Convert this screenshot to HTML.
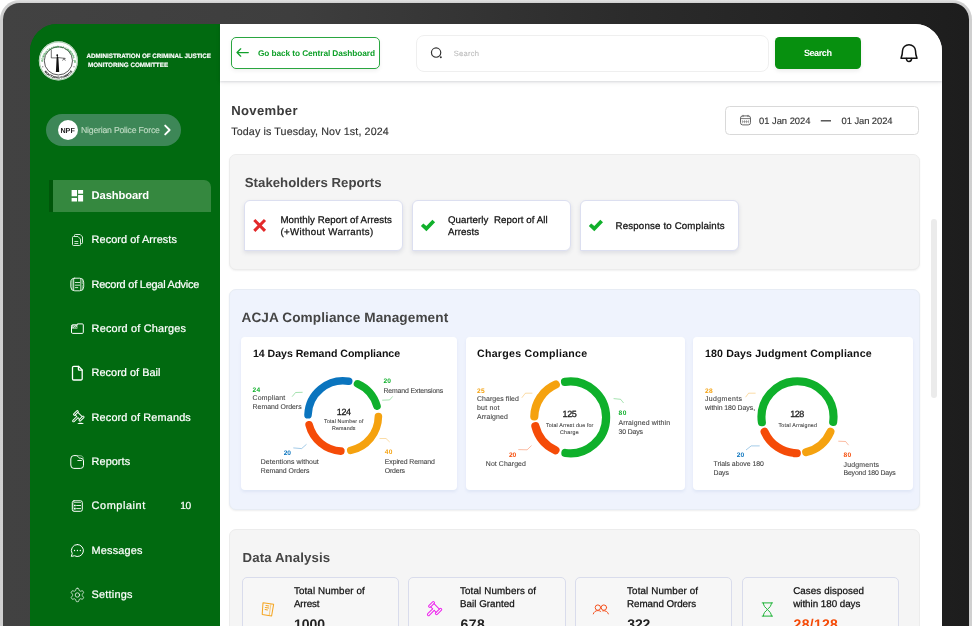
<!DOCTYPE html>
<html lang="en">
<head>
<meta charset="utf-8">
<title>ACJMC Dashboard</title>
<style>
*{box-sizing:border-box;margin:0;padding:0}
html,body{width:973px;height:626px;overflow:hidden;background:#fff;font-family:"Liberation Sans",sans-serif;color:#333}
.abs{position:absolute}
.t{font-family:"Liberation Sans",sans-serif;white-space:pre;text-rendering:geometricPrecision}
#frame{position:absolute;left:0;top:0;width:972px;height:660px;border-radius:19.500px;background:linear-gradient(180deg,#e2e2e2 0,#cfcfcf 3px,#d0d0d0 100%)}
#bezel{position:absolute;left:3px;top:3px;width:966px;height:660px;border-radius:16.500px;background:linear-gradient(90deg,#424242 0%,#3e3e3e 30%,#2b2b2b 65%,#1d1d1d 100%)}
#screen{position:absolute;left:30px;top:24px;width:912px;height:640px;border-radius:27px 27px 0 0;background:linear-gradient(90deg,#016a10 0,#016a10 190px,#fff 190px);overflow:hidden}
#pg{position:absolute;left:-30px;top:-24px;width:973px;height:664px}
#side{position:absolute;left:30px;top:24px;width:190px;height:640px;background:#016a10}
#head{position:absolute;left:220px;top:24px;width:722px;height:56.5px;background:#fff;box-shadow:0 1px 2px rgba(40,50,80,.13),0 2px 5px rgba(0,0,0,.06)}
.card{position:absolute;border-radius:7px;left:229px;width:691px}
.sub{position:absolute;background:#fff;border-radius:4px;box-shadow:0 2px 3px rgba(170,185,225,.22)}
.sk{position:absolute;top:200px;height:51px;width:159px;background:#fff;border:1px solid #dcdff0;border-radius:6px 6px 6px 0;box-shadow:0 2px 4px rgba(60,70,110,.13)}
.dc{position:absolute;top:577px;height:90px;width:157px;border:1px solid #d9dcec;border-radius:5px;background:#f7f7f7}
svg{overflow:visible}
.ic{position:absolute;fill:none;stroke:#fff;stroke-width:1;stroke-linecap:round;stroke-linejoin:round}
</style>
</head>
<body>
<div id="frame"></div><div id="bezel"></div>
<div id="screen"><div id="pg">
  <div id="side"></div>
  <!-- main cards -->
  <div class="card" style="top:154.2px;height:116px;background:#f5f5f5;border:1px solid #ececec;box-shadow:0 1px 2px rgba(0,0,0,.06)"></div>
  <div class="sk" style="left:244px"></div>
  <div class="sk" style="left:412px"></div>
  <div class="sk" style="left:580px"></div>
  <div class="card" style="top:289px;height:221px;border-radius:7px;background:#eff3fd;border:1px solid #e7ecf4;box-shadow:0 1px 2px rgba(0,0,0,.07)"></div>
  <div class="sub" style="left:241px;top:337px;width:216px;height:153px"></div>
  <div class="sub" style="left:466px;top:337px;width:219px;height:153px"></div>
  <div class="sub" style="left:693px;top:337px;width:220px;height:153px"></div>
  <div class="card" style="top:529px;height:140px;background:#f5f5f5;border:1px solid #ececec"></div>
  <div class="dc" style="left:242px"></div>
  <div class="dc" style="left:408px;width:158px"></div>
  <div class="dc" style="left:575px"></div>
  <div class="dc" style="left:742.2px"></div>
  <div id="head"></div>
  <!-- scrollbar -->
  <div class="abs" style="left:931px;top:219px;width:6px;height:178.500px;border-radius:3px;background:#ebebeb"></div>

  <svg class="abs" style="left:0;top:0;will-change:transform" width="973" height="664" viewBox="0 0 973 664"><circle cx="58.4" cy="60.85" r="19.600" fill="#fff"/><circle cx="58.4" cy="60.85" r="18.900" fill="none" stroke="#3c8f47" stroke-width=".45"/><circle cx="58.4" cy="60.85" r="14.100" fill="none" stroke="#111" stroke-width=".7"/><path id="lgt" d="M42.80 63.35A15.6 15.6 0 1 1 74.00 63.35" fill="none"/><path id="lgb" d="M44.32 71.41A17.6 17.6 0 0 0 72.48 71.41" fill="none"/><text class="t" font-size="2.800" font-weight="700" fill="#2f9440" letter-spacing="-.02"><textPath href="#lgt" startOffset="1.5">ADMINISTRATION OF CRIMINAL JUSTICE</textPath></text><text class="t" font-size="2.600" font-weight="700" fill="#222" stroke="#222" stroke-width=".12" letter-spacing=".0"><textPath href="#lgb" startOffset=".6">MONITORING COMMITTEE</textPath></text><circle cx="42.80" cy="66.85" r=".5" fill="#222"/><circle cx="74.00" cy="66.85" r=".5" fill="#222"/><g stroke="#111" fill="none" stroke-width=".6" stroke-linecap="round"><path d="M57.200 54.300c.6 0 .9.500.9 1.100c0 .7-.3 1-.5 1.200c.5.300.8.900.8 1.600L59.200 71.900H55.900L56.600 58.200c0-.7.200-1.300.6-1.600c-.5-.2-.8-.6-.8-1.200c0-.6.300-1.100.800-1.100Z" fill="#111" stroke="none"/><path d="M51.300 50.200V57.900H57"/><path d="M57.500 57.500L65.200 58.400"/><path d="M62.600 60.300c.2-1.700 2.500-1.700 2.700 0" stroke-width=".55"/><path d="M64 58.300V59.200" stroke-width=".4"/></g></svg>
  <!-- org pill -->
  <div class="abs" style="left:46px;top:114.300px;width:135px;height:31.800px;border-radius:16px;background:#3d8757"></div>
  <div class="abs" style="left:57.700px;top:120.300px;width:20px;height:20px;border-radius:50%;background:#fff"></div>
  <svg class="abs" style="left:163px;top:124.400px" width="9" height="12" viewBox="0 0 9 12"><path d="M2.200 1.600L6.600 6L2.200 10.400" fill="none" stroke="#fff" stroke-width="1.900" stroke-linecap="round" stroke-linejoin="round"/></svg>
  <!-- active item -->
  <div class="abs" style="left:49px;top:180px;width:162px;height:32px;background:#35883f;border-left:4px solid #00570a;border-radius:0 7px 0 0"></div>
  <svg class="abs" style="left:0;top:0" width="973" height="664" viewBox="0 0 973 664" fill="none" stroke="#fff" stroke-width="1" stroke-linecap="round" stroke-linejoin="round"><path d="M71.600 190.100h5.400v6.100h-5.400zM78.100 190.100h5v3.600h-5zM78.100 195.100h5v6.500h-5zM71.600 198h5.400v3.600h-5.400z" fill="#fff" stroke="none"/><g stroke="#d7ead9" stroke-width="1"><path d="M74.500 236.200V235.300a.8.800 0 0 1 .8-.8H80.200L82.500 236.900V242.700a.8.800 0 0 1-.8.800H80.800"/><path d="M72.500 237.300a.8.800 0 0 1 .8-.8H78L80.500 239.100V244.700a.8.800 0 0 1-.8.800H73.300a.8.800 0 0 1-.8-.8Z"/><path d="M74.800 241.500H77.900M74.800 243.500H77.900" stroke-width=".9"/></g><g stroke="#e3f0e4"><rect x="70.800" y="278.200" width="12.900" height="12.600" rx="3.900"/><path d="M71.300 281.500c0-1.500.9-2.600 2.300-3V290.600c-1.400-.4-2.300-1.500-2.300-3Z" fill="#fff" fill-opacity=".35" stroke="none"/><path d="M73.700 278.600V290.400M80.800 278.600V290.400" stroke-width=".9"/><path d="M82.300 279.600V283.800M82.300 285.600V289.600" stroke-width=".6"/><path d="M75.300 282.500H79.700M75.300 285.200H79.700M75.300 287.600H77.800" stroke-width=".9"/></g><path d="M71.500 325.800a1 1 0 0 1 1-1H77.400V323.900H82.300a1 1 0 0 1 1 1V332.400a1 1 0 0 1-1 1H72.500a1 1 0 0 1-1-1Z"/><path d="M71.800 325.100H77.400V328.600H71.800Z" fill="#fff" fill-opacity=".8" stroke="none"/><path d="M72.900 326.600l1.300-.9M74.500 327.600c.4-1.200 1.700-1.200 2.100 0" stroke="#016a10" stroke-width=".7"/><g stroke-width="1.300"><path d="M72.500 367.500a1.200 1.200 0 0 1 1.200-1.200H78.500L82.200 369.900V378.800a1.200 1.200 0 0 1-1.200 1.200H73.700a1.200 1.200 0 0 1-1.200-1.200Z"/><path d="M78.400 366.500V369.200a.9.900 0 0 0 .9.900H82"/></g><g transform="translate(78.7 415.8) rotate(45) scale(0.8)" fill="none" stroke="#fff" stroke-width="1.19" stroke-linejoin="round"><rect x="-6.1" y="-3.6" width="2.3" height="7.2" rx=".9"/><rect x="3.8" y="-3.9" width="2.3" height="7.8" rx=".9"/><path d="M-3.800 -2.300H3.800M-3.800 2.300H-1.100M1.100 2.300H3.800"/><path d="M-1.100 2.300V9.200a1.100 1.100 0 0 0 2.200 0V2.300"/></g><path d="M77.300 424c1.300-1.700 5.300-1.700 6.600 0Z" fill="#fff" stroke="none"/><path d="M70.800 458.600a3 3 0 0 1 3-3H76.300c.7 0 1 .2 1.500.8L79 457.800c.3.300.6.400 1 .4H80.700a2.800 2.800 0 0 1 2.800 2.800V465.400a3 3 0 0 1-3 3H73.800a3 3 0 0 1-3-3Z"/><path d="M76.700 455.700H80.200c1.600 0 2.800.9 3.100 2.500" stroke-opacity=".55"/><path d="M77.800 460.500H81.400" stroke-width=".9"/><rect x="72.300" y="500.800" width="10" height="10.500" rx="1.700"/><path d="M74.200 502.500H80.600" stroke-width=".8" stroke-opacity=".8"/><path d="M76.600 505.500H80.600M76.600 508.600H80.600" stroke-width=".9"/><path d="M74 504.700H75.700V506.300H74ZM74 507.800H75.700V509.400H74Z" fill="#fff" stroke="none"/><path d="M73.300 501.600V510.600" stroke-width=".6" stroke-opacity=".6"/><path d="M77.400 544.500a6 6 0 1 1-2.900 11.250L71.300 556.400l.9-2.900A6 6 0 0 1 77.400 544.500Z"/><g fill="#fff" stroke="none"><circle cx="74.500" cy="550.500" r=".65"/><circle cx="77.400" cy="550.500" r=".65"/><circle cx="80.300" cy="550.500" r=".65"/></g><path d="M77.40 588.30L77.75 588.31L78.10 588.34L78.44 588.44L78.69 588.92L78.89 589.45L79.03 589.98L79.14 590.47L79.35 590.61L79.58 590.72L79.80 590.84L80.01 590.97L80.22 591.12L80.46 591.23L80.93 591.08L81.47 590.93L82.02 590.84L82.56 590.82L82.82 591.06L83.02 591.35L83.20 591.65L83.37 591.96L83.52 592.27L83.60 592.62L83.32 593.08L82.95 593.51L82.56 593.90L82.20 594.24L82.17 594.50L82.19 594.75L82.20 595.00L82.19 595.25L82.17 595.50L82.20 595.76L82.56 596.10L82.95 596.49L83.32 596.92L83.60 597.38L83.52 597.73L83.37 598.04L83.20 598.35L83.02 598.65L82.82 598.94L82.56 599.18L82.02 599.16L81.47 599.07L80.93 598.92L80.46 598.77L80.22 598.88L80.01 599.03L79.80 599.16L79.58 599.28L79.35 599.39L79.14 599.53L79.03 600.02L78.89 600.55L78.69 601.08L78.44 601.56L78.10 601.66L77.75 601.69L77.40 601.70L77.05 601.69L76.70 601.66L76.36 601.56L76.11 601.08L75.91 600.55L75.77 600.02L75.66 599.53L75.45 599.39L75.22 599.28L75.00 599.16L74.79 599.03L74.58 598.88L74.34 598.77L73.87 598.92L73.33 599.07L72.78 599.16L72.24 599.18L71.98 598.94L71.78 598.65L71.60 598.35L71.43 598.04L71.28 597.73L71.20 597.38L71.48 596.92L71.85 596.49L72.24 596.10L72.60 595.76L72.63 595.50L72.61 595.25L72.60 595.00L72.61 594.75L72.63 594.50L72.60 594.24L72.24 593.90L71.85 593.51L71.48 593.08L71.20 592.62L71.28 592.27L71.43 591.96L71.60 591.65L71.78 591.35L71.98 591.06L72.24 590.82L72.78 590.84L73.33 590.93L73.87 591.08L74.34 591.23L74.58 591.12L74.79 590.97L75.00 590.84L75.22 590.72L75.45 590.61L75.66 590.47L75.77 589.98L75.91 589.45L76.11 588.92L76.36 588.44L76.70 588.34L77.05 588.31Z" stroke-width=".9" stroke-opacity=".85"/><circle cx="77.400" cy="595" r="2.200" stroke-width=".9" stroke-opacity=".85"/></svg>
  <!-- header widgets -->
  <div class="abs" style="left:231.200px;top:37.200px;width:148.600px;height:31.400px;border:1px solid #2aa640;border-radius:5px;background:#fff;box-shadow:0 2px 4px rgba(0,0,0,.06)"></div>
  <svg class="abs" style="left:235.900px;top:48.300px" width="13" height="9" viewBox="0 0 13 9"><path d="M12.300 4.500H1M4.700 .8L1 4.500l3.700 3.700" fill="none" stroke="#11a12b" stroke-width="1.250" stroke-linecap="round" stroke-linejoin="round"/></svg>
  <div class="abs" style="left:416px;top:35px;width:353px;height:37px;border:1px solid #efefef;border-radius:8px;background:#fff"></div>
  <svg class="abs" style="left:0;top:0" width="973" height="100" viewBox="0 0 973 100"><circle cx="436.100" cy="52.600" r="4.650" fill="none" stroke="#333" stroke-width="1.200"/><circle cx="440.800" cy="57.300" r="1" fill="#333"/></svg>
  <div class="abs" style="left:775.200px;top:37.200px;width:85.500px;height:31.400px;border-radius:4.500px;background:#07900f;box-shadow:0 2px 4px rgba(0,0,0,.08)"></div>
  <svg class="abs" style="left:0;top:0" width="973" height="100" viewBox="0 0 973 100" fill="none" stroke="#111" stroke-width="1.500" stroke-linejoin="round" stroke-linecap="round"><path d="M901 58.200C902.300 55.200 902.500 53.200 902.500 50.800A6.500 6.100 0 0 1 915.500 50.800C915.500 53.200 915.700 55.200 917 58.200Z"/><path d="M906.400 58.600a2.600 2.900 0 0 0 5.200 0"/></svg>

  <!-- date range -->
  <div class="abs" style="left:725.200px;top:105.900px;width:193.700px;height:28.700px;border:1px solid #d9d9d9;border-radius:4.500px;background:#fff"></div>
  <svg class="abs" style="left:739.800px;top:114.700px" width="11" height="10.500" viewBox="0 0 11 10.500"><rect x=".5" y=".9" width="10" height="9" rx="2.200" fill="none" stroke="#555" stroke-width=".9"/><path d="M.6 3.600h9.800" stroke="#555" stroke-width=".8"/><path d="M3 .3v1.400M8 .3v1.400" stroke="#555" stroke-width=".8" stroke-linecap="round"/><path d="M2.400 5.200v3M4.500 5.200v3M6.500 5.200v3M8.600 5.200v3M2.400 6.700h6.200" stroke="#777" stroke-width=".6"/></svg>
  <svg class="abs" style="left:0;top:0" width="973" height="200" viewBox="0 0 973 200"><path d="M820.800 120.800H831" stroke="#444" stroke-width="1.350" fill="none"/></svg>

  <!-- stakeholder icons -->
  <svg class="abs" style="left:0;top:0" width="973" height="300" viewBox="0 0 973 300"><path d="M254.300 220L265 230.900M265 220L254.300 230.900" stroke="#e3292a" stroke-width="3" stroke-linecap="butt" fill="none"/></svg>
  
  

  <svg class="abs" style="left:0;top:0" width="973" height="300" viewBox="0 0 973 300"><path d="M420.9 225.9L423.3 223.4L426.4 226.1L432.4 219.8L435.1 222.3L426.4 231.3ZM588.8 225.9L591.2 223.4L594.3 226.1L600.3 219.8L603.0 222.3L594.3 231.3Z" fill="#11b02c"/></svg>
<svg class="abs" style="left:0;top:0" width="973" height="664" viewBox="0 0 973 664" fill="none" stroke-linecap="round" stroke-linejoin="round"><g stroke="#f5a623" stroke-width="1.050"><path d="M263 602.800L273.600 604.300L271.600 616L262.200 614.400Z"/><path d="M270.900 604.200L269.200 615.400" stroke-width=".8" stroke-opacity=".7"/><path d="M266 605.500L268.900 605.900M265.300 607.600L268.700 608.100M265.100 609.600L267.500 610"/></g><g transform="translate(435.05 608.0) rotate(45) scale(1.0)" fill="none" stroke="#ee26ee" stroke-width="1.00" stroke-linejoin="round"><rect x="-6.1" y="-3.6" width="2.3" height="7.2" rx=".9"/><rect x="3.8" y="-3.9" width="2.3" height="7.8" rx=".9"/><path d="M-3.800 -2.300H3.800M-3.800 2.300H-1.100M1.100 2.300H3.800"/><path d="M-1.100 2.300V9.200a1.100 1.100 0 0 0 2.200 0V2.300"/></g><g stroke="#f4511e" stroke-width="1"><circle cx="597.900" cy="607.600" r="2.700"/><circle cx="603.900" cy="607.600" r="2.700"/><path d="M593.300 613.900c.6-2 2.300-3.300 4.600-3.300c1.100 0 2.100.3 2.900 1M602.700 610.800c2.800-.5 5 .8 5.700 3.100"/></g><g stroke="#1fb338" stroke-width="1"><path d="M762.200 602.900H772.600M762.200 616.100H772.600M763.400 603.100c0 3 2 4.400 4 6.400c2-2 4-3.400 4-6.400M763.400 615.900c0-3 2-4.400 4-6.400c2 2 4 3.400 4 6.400"/></g></svg>
<svg class="abs" style="left:0;top:0" width="973" height="626" viewBox="0 0 973 626"><path d="M308.02 414.77A35.2 35.2 0 0 1 348.71 381.23" fill="none" stroke="#0a74be" stroke-width="7.6" stroke-linecap="round"/><path d="M357.52 383.84A35.2 35.2 0 0 1 377.00 406.18" fill="none" stroke="#0fb02b" stroke-width="7.6" stroke-linecap="round"/><path d="M378.40 416.49A35.2 35.2 0 0 1 350.76 450.38" fill="none" stroke="#f5a20f" stroke-width="7.6" stroke-linecap="round"/><path d="M340.87 451.12A35.2 35.2 0 0 1 309.11 424.75" fill="none" stroke="#f54b08" stroke-width="7.6" stroke-linecap="round"/><path d="M292.1 396.7L295.6 392.5L302.6 392.3" fill="none" stroke="#0fb02b" stroke-width=".5" stroke-opacity=".75"/><path d="M293.3 447.9L301.6 448.6L306.5 444.3" fill="none" stroke="#0a74be" stroke-width=".5" stroke-opacity=".75"/><path d="M382.2 400.2L389.7 399.9L392.7 396.4" fill="none" stroke="#0fb02b" stroke-width=".5" stroke-opacity=".75"/><path d="M379.5 438.5L386.0 438.5L389.7 442.0" fill="none" stroke="#f5a20f" stroke-width=".5" stroke-opacity=".75"/><path d="M565.02 381.88A35.9 35.9 0 1 1 565.39 452.98" fill="none" stroke="#0fb02b" stroke-width="8.2" stroke-linecap="round"/><path d="M555.48 450.15A35.9 35.9 0 0 1 535.40 426.21" fill="none" stroke="#f54b08" stroke-width="8.2" stroke-linecap="round"/><path d="M534.31 416.52A35.9 35.9 0 0 1 555.77 384.53" fill="none" stroke="#f5a20f" stroke-width="8.2" stroke-linecap="round"/><path d="M521.8 397.8L525.4 393.2L532.4 393.2" fill="none" stroke="#f5a20f" stroke-width=".5" stroke-opacity=".75"/><path d="M518.3 449.6L527.1 449.8L531.5 445.6" fill="none" stroke="#f54b08" stroke-width=".5" stroke-opacity=".75"/><path d="M613.6 398.6L620.6 399.3L623.6 403.0" fill="none" stroke="#0fb02b" stroke-width=".5" stroke-opacity=".75"/><path d="M761.86 422.27A36.0 36.0 0 1 1 833.18 421.96" fill="none" stroke="#0fb02b" stroke-width="8.1" stroke-linecap="round"/><path d="M830.41 431.79A36.0 36.0 0 0 1 806.15 452.15" fill="none" stroke="#f5a20f" stroke-width="8.1" stroke-linecap="round"/><path d="M796.81 453.19A36.0 36.0 0 0 1 764.59 431.79" fill="none" stroke="#f54b08" stroke-width="8.1" stroke-linecap="round"/><path d="M745.6 397.2L748.6 393.2L755.6 393.2" fill="none" stroke="#f5a20f" stroke-width=".5" stroke-opacity=".75"/><path d="M746.0 450.0L751.2 445.9L759.7 445.9" fill="none" stroke="#0a74be" stroke-width=".5" stroke-opacity=".75"/><path d="M838.3 441.2L845.6 441.5L848.6 445.2" fill="none" stroke="#f54b08" stroke-width=".5" stroke-opacity=".75"/></svg>
<svg id="txt" class="abs" style="left:0;top:0;will-change:transform" width="973" height="664" viewBox="0 0 973 664">
<text class="t" x="86.50" y="58.30" font-size="6.3" fill="#fff" font-weight="700" letter-spacing="-0.029" stroke="#fff" stroke-width=".15">ADMINISTRATION OF CRIMINAL JUSTICE</text>
<text class="t" x="88.00" y="67.30" font-size="6.3" fill="#fff" font-weight="700" letter-spacing="-0.013" stroke="#fff" stroke-width=".15">MONITORING COMMITTEE</text>
<text class="t" x="60.40" y="133.10" font-size="7.2" fill="#222" font-weight="700" letter-spacing="0.012">NPF</text>
<text class="t" x="81.00" y="133.20" font-size="8.7" fill="#bcd9c1" letter-spacing="-0.208" stroke="#bcd9c1" stroke-width="0.15">Nigerian Police Force</text>
<text class="t" x="91.60" y="199.20" font-size="11.2" fill="#fff" font-weight="700" letter-spacing="-0.117">Dashboard</text>
<text class="t" x="91.60" y="243.40" font-size="10.9" fill="#fff" letter-spacing="0.072" stroke="#fff" stroke-width="0.22">Record of Arrests</text>
<text class="t" x="91.60" y="287.70" font-size="10.9" fill="#fff" letter-spacing="-0.206" stroke="#fff" stroke-width="0.22">Record of Legal Advice</text>
<text class="t" x="91.60" y="332.00" font-size="10.9" fill="#fff" letter-spacing="0.181" stroke="#fff" stroke-width="0.22">Record of Charges</text>
<text class="t" x="91.60" y="376.30" font-size="10.9" fill="#fff" letter-spacing="0.030" stroke="#fff" stroke-width="0.22">Record of Bail</text>
<text class="t" x="91.60" y="420.60" font-size="10.9" fill="#fff" letter-spacing="0.146" stroke="#fff" stroke-width="0.22">Record of Remands</text>
<text class="t" x="91.60" y="464.90" font-size="10.9" fill="#fff" letter-spacing="0.060" stroke="#fff" stroke-width="0.22">Reports</text>
<text class="t" x="91.60" y="509.30" font-size="10.9" fill="#fff" letter-spacing="0.571" stroke="#fff" stroke-width="0.22">Complaint</text>
<text class="t" x="91.60" y="553.50" font-size="10.9" fill="#fff" letter-spacing="0.166" stroke="#fff" stroke-width="0.22">Messages</text>
<text class="t" x="91.60" y="597.90" font-size="10.9" fill="#fff" letter-spacing="0.206" stroke="#fff" stroke-width="0.22">Settings</text>
<text class="t" x="180.20" y="509.30" font-size="10.2" fill="#fff" letter-spacing="-0.450" stroke="#fff" stroke-width="0.22">10</text>
<text class="t" x="257.90" y="56.10" font-size="8.3" fill="#11a12b" font-weight="700" letter-spacing="-0.085">Go back to Central Dashboard</text>
<text class="t" x="453.70" y="56.10" font-size="7.6" fill="#bcbcbc" letter-spacing="0.248" stroke="#bcbcbc" stroke-width="0.1">Search</text>
<text class="t" x="803.90" y="56.10" font-size="9.1" fill="#fff" font-weight="700" letter-spacing="-0.450">Search</text>
<text class="t" x="231.20" y="114.90" font-size="13.1" fill="#3a3a3a" font-weight="700" letter-spacing="0.336">November</text>
<text class="t" x="231.20" y="135.10" font-size="10.7" fill="#333" letter-spacing="0.131" stroke="#333" stroke-width="0.15">Today is Tuesday, Nov 1st, 2024</text>
<text class="t" x="759.10" y="123.90" font-size="9.4" fill="#333" letter-spacing="-0.031" stroke="#333" stroke-width="0.15">01 Jan 2024</text>
<text class="t" x="841.60" y="123.90" font-size="9.4" fill="#333" letter-spacing="-0.071" stroke="#333" stroke-width="0.15">01 Jan 2024</text>
<text class="t" x="244.80" y="186.60" font-size="13.2" fill="#444" font-weight="700" letter-spacing="0.020">Stakeholders Reports</text>
<text class="t" x="280.40" y="222.70" font-size="9.7" fill="#111" letter-spacing="0.088" stroke="#111" stroke-width=".25">Monthly Report of Arrests</text>
<text class="t" x="280.40" y="235.40" font-size="9.7" fill="#111" letter-spacing="0.351" stroke="#111" stroke-width=".25">(+Without Warrants)</text>
<text class="t" x="447.90" y="222.70" font-size="9.7" fill="#111" letter-spacing="0.074" stroke="#111" stroke-width=".25" xml:space="preserve">Quarterly  Report of All</text>
<text class="t" x="447.90" y="235.40" font-size="9.7" fill="#111" letter-spacing="0.085" stroke="#111" stroke-width=".25">Arrests</text>
<text class="t" x="615.60" y="229.10" font-size="9.7" fill="#111" letter-spacing="0.164" stroke="#111" stroke-width=".25">Response to Complaints</text>
<text class="t" x="241.50" y="322.00" font-size="13.6" fill="#444" font-weight="700" letter-spacing="0.100">ACJA Compliance Management</text>
<text class="t" x="252.90" y="357.30" font-size="10.6" fill="#111" font-weight="700" letter-spacing="-0.024">14 Days Remand Compliance</text>
<text class="t" x="477.00" y="357.30" font-size="10.6" fill="#111" font-weight="700" letter-spacing="0.283">Charges Compliance</text>
<text class="t" x="705.00" y="357.30" font-size="10.6" fill="#111" font-weight="700" letter-spacing="0.152">180 Days Judgment Compliance</text>
<text class="t" x="252.60" y="391.60" font-size="6.6" fill="#0fb02b" font-weight="700" letter-spacing="0.156">24</text>
<text class="t" x="252.60" y="399.90" font-size="6.9" fill="#444" letter-spacing="0.184" stroke="#444" stroke-width="0.1">Compliant</text>
<text class="t" x="252.60" y="408.70" font-size="6.9" fill="#444" stroke="#444" stroke-width="0.1">Remand Orders</text>
<text class="t" x="336.83" y="414.80" font-size="9.0" fill="#222" letter-spacing="-0.450" stroke="#222" stroke-width=".3">124</text>
<text class="t" x="324.10" y="423.10" font-size="5.3" fill="#444" letter-spacing="0.136" stroke="#444" stroke-width="0.1">Total Number of</text>
<text class="t" x="332.00" y="429.80" font-size="5.3" fill="#444" letter-spacing="0.138" stroke="#444" stroke-width="0.1">Remands</text>
<text class="t" x="283.70" y="454.70" font-size="6.6" fill="#0a74be" font-weight="700" letter-spacing="-0.044">20</text>
<text class="t" x="260.80" y="463.50" font-size="6.9" fill="#444" letter-spacing="0.076" stroke="#444" stroke-width="0.1">Detentions without</text>
<text class="t" x="260.80" y="472.50" font-size="6.9" fill="#444" letter-spacing="-0.028" stroke="#444" stroke-width="0.1">Remand Orders</text>
<text class="t" x="383.40" y="382.70" font-size="6.6" fill="#0fb02b" font-weight="700" letter-spacing="0.256">20</text>
<text class="t" x="383.40" y="392.80" font-size="6.9" fill="#444" letter-spacing="-0.111" stroke="#444" stroke-width="0.1">Remand Extensions</text>
<text class="t" x="384.80" y="454.00" font-size="6.6" fill="#f5a20f" font-weight="700" letter-spacing="0.256">40</text>
<text class="t" x="384.80" y="463.50" font-size="6.9" fill="#444" letter-spacing="-0.094" stroke="#444" stroke-width="0.1">Expired Remand</text>
<text class="t" x="384.80" y="472.50" font-size="6.9" fill="#444" letter-spacing="-0.173" stroke="#444" stroke-width="0.1">Orders</text>
<text class="t" x="477.00" y="392.50" font-size="6.6" fill="#f5a20f" font-weight="700" letter-spacing="0.256">25</text>
<text class="t" x="477.00" y="400.80" font-size="6.9" fill="#444" letter-spacing="0.108" stroke="#444" stroke-width="0.1">Charges filed</text>
<text class="t" x="477.00" y="409.90" font-size="6.9" fill="#444" letter-spacing="0.237" stroke="#444" stroke-width="0.1">but not</text>
<text class="t" x="477.00" y="418.70" font-size="6.9" fill="#444" letter-spacing="0.114" stroke="#444" stroke-width="0.1">Arraigned</text>
<text class="t" x="562.58" y="416.60" font-size="9.0" fill="#222" letter-spacing="-0.450" stroke="#222" stroke-width=".3">125</text>
<text class="t" x="545.90" y="426.60" font-size="5.3" fill="#444" letter-spacing="0.160" stroke="#444" stroke-width="0.1">Total Arrest due for</text>
<text class="t" x="560.00" y="434.10" font-size="5.3" fill="#444" letter-spacing="0.285" stroke="#444" stroke-width="0.1">Charge</text>
<text class="t" x="509.00" y="456.60" font-size="6.6" fill="#f54b08" font-weight="700" letter-spacing="-0.144">20</text>
<text class="t" x="485.80" y="465.80" font-size="6.9" fill="#444" letter-spacing="0.102" stroke="#444" stroke-width="0.1">Not Charged</text>
<text class="t" x="618.50" y="414.80" font-size="6.6" fill="#0fb02b" font-weight="700" letter-spacing="0.556">80</text>
<text class="t" x="618.50" y="424.50" font-size="6.9" fill="#444" letter-spacing="0.139" stroke="#444" stroke-width="0.1">Arraigned within</text>
<text class="t" x="618.50" y="433.60" font-size="6.9" fill="#444" letter-spacing="-0.130" stroke="#444" stroke-width="0.1">30 Days</text>
<text class="t" x="705.00" y="392.50" font-size="6.6" fill="#f5a20f" font-weight="700" letter-spacing="0.256">28</text>
<text class="t" x="705.00" y="400.80" font-size="6.9" fill="#444" letter-spacing="0.398" stroke="#444" stroke-width="0.1">Judgments</text>
<text class="t" x="705.00" y="410.40" font-size="6.9" fill="#444" letter-spacing="-0.031" stroke="#444" stroke-width="0.1">within 180 Days,</text>
<text class="t" x="790.13" y="416.60" font-size="9.0" fill="#222" letter-spacing="-0.450" stroke="#222" stroke-width=".3">128</text>
<text class="t" x="778.50" y="426.60" font-size="5.3" fill="#444" letter-spacing="0.225" stroke="#444" stroke-width="0.1">Total Arraigned</text>
<text class="t" x="736.80" y="456.60" font-size="6.6" fill="#0a74be" font-weight="700" letter-spacing="0.056">20</text>
<text class="t" x="713.50" y="465.80" font-size="6.9" fill="#444" letter-spacing="-0.019" stroke="#444" stroke-width="0.1">Trials above 180</text>
<text class="t" x="713.50" y="475.40" font-size="6.9" fill="#444" letter-spacing="-0.101" stroke="#444" stroke-width="0.1">Days</text>
<text class="t" x="843.50" y="456.60" font-size="6.6" fill="#f54b08" font-weight="700" letter-spacing="0.456">80</text>
<text class="t" x="843.50" y="466.70" font-size="6.9" fill="#444" letter-spacing="0.223" stroke="#444" stroke-width="0.1">Judgments</text>
<text class="t" x="843.50" y="475.40" font-size="6.9" fill="#444" letter-spacing="-0.158" stroke="#444" stroke-width="0.1">Beyond 180 Days</text>
<text class="t" x="242.50" y="562.40" font-size="13.2" fill="#444" font-weight="700" letter-spacing="0.140">Data Analysis</text>
<text class="t" x="293.90" y="594.00" font-size="9.8" fill="#111" letter-spacing="0.125" stroke="#111" stroke-width=".25">Total Number of</text>
<text class="t" x="293.90" y="606.80" font-size="9.8" fill="#111" letter-spacing="-0.088" stroke="#111" stroke-width=".25">Arrest</text>
<text class="t" x="293.90" y="629.30" font-size="14" fill="#222" font-weight="700" letter-spacing="0.015">1000</text>
<text class="t" x="460.00" y="594.00" font-size="9.8" fill="#111" letter-spacing="0.136" stroke="#111" stroke-width=".25">Total Numbers of</text>
<text class="t" x="460.00" y="606.80" font-size="9.8" fill="#111" letter-spacing="0.021" stroke="#111" stroke-width=".25">Bail Granted</text>
<text class="t" x="460.60" y="629.30" font-size="14" fill="#222" font-weight="700" letter-spacing="0.370">678</text>
<text class="t" x="627.10" y="594.00" font-size="9.8" fill="#111" letter-spacing="0.125" stroke="#111" stroke-width=".25">Total Number of</text>
<text class="t" x="627.10" y="606.80" font-size="9.8" fill="#111" letter-spacing="-0.059" stroke="#111" stroke-width=".25">Remand Orders</text>
<text class="t" x="627.30" y="629.30" font-size="14" fill="#222" font-weight="700" letter-spacing="-0.180">322</text>
<text class="t" x="793.20" y="594.00" font-size="9.8" fill="#111" letter-spacing="0.075" stroke="#111" stroke-width=".25">Cases disposed</text>
<text class="t" x="793.20" y="606.80" font-size="9.8" fill="#111" letter-spacing="-0.024" stroke="#111" stroke-width=".25">within 180 days</text>
<text class="t" x="793.60" y="629.30" font-size="14" fill="#f54b08" font-weight="700" letter-spacing="0.274">28/128</text>
</svg>
</div></div>
</body>
</html>
